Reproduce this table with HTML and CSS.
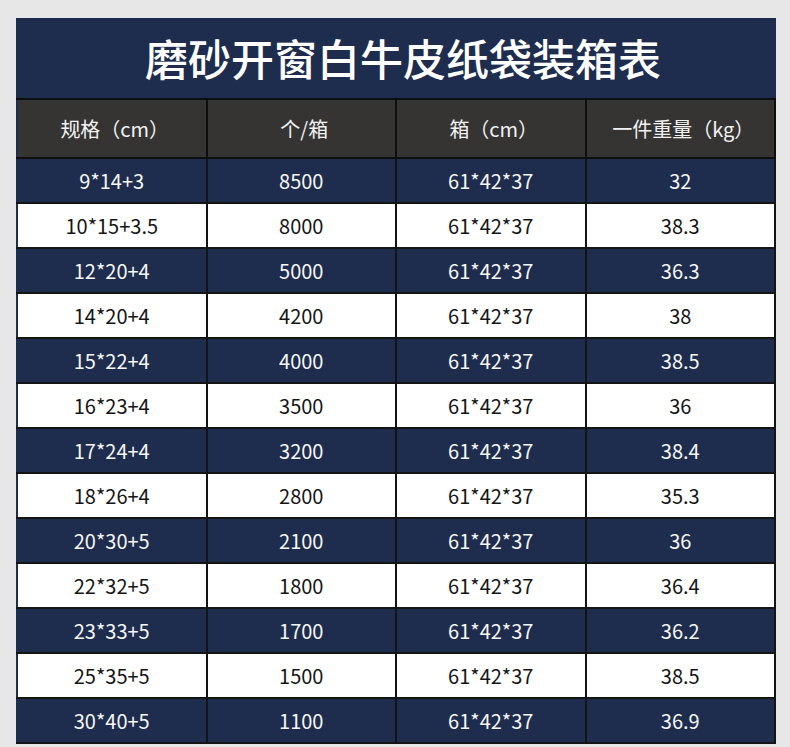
FILE: index.html
```html
<!DOCTYPE html>
<html lang="zh">
<head>
<meta charset="utf-8">
<link rel="stylesheet" href="styles.css">
</head>
<body>
<div class="sheet">
  <h1 class="title">磨砂开窗白牛皮纸袋装箱表</h1>
  <table class="grid">
    <thead>
      <tr><th>规格（cm）</th><th>个/箱</th><th>箱（cm）</th><th>一件重量（kg）</th></tr>
    </thead>
    <tbody>
      <tr class="dark"><td>9*14+3</td><td>8500</td><td>61*42*37</td><td>32</td></tr>
      <tr class="light"><td>10*15+3.5</td><td>8000</td><td>61*42*37</td><td>38.3</td></tr>
      <tr class="dark"><td>12*20+4</td><td>5000</td><td>61*42*37</td><td>36.3</td></tr>
      <tr class="light"><td>14*20+4</td><td>4200</td><td>61*42*37</td><td>38</td></tr>
      <tr class="dark"><td>15*22+4</td><td>4000</td><td>61*42*37</td><td>38.5</td></tr>
      <tr class="light"><td>16*23+4</td><td>3500</td><td>61*42*37</td><td>36</td></tr>
      <tr class="dark"><td>17*24+4</td><td>3200</td><td>61*42*37</td><td>38.4</td></tr>
      <tr class="light"><td>18*26+4</td><td>2800</td><td>61*42*37</td><td>35.3</td></tr>
      <tr class="dark"><td>20*30+5</td><td>2100</td><td>61*42*37</td><td>36</td></tr>
      <tr class="light"><td>22*32+5</td><td>1800</td><td>61*42*37</td><td>36.4</td></tr>
      <tr class="dark"><td>23*33+5</td><td>1700</td><td>61*42*37</td><td>36.2</td></tr>
      <tr class="light"><td>25*35+5</td><td>1500</td><td>61*42*37</td><td>38.5</td></tr>
      <tr class="dark"><td>30*40+5</td><td>1100</td><td>61*42*37</td><td>36.9</td></tr>
    </tbody>
  </table>
</div>
</body>
</html>
```
FILE: styles.css
```css
html, body {
  margin: 0;
  padding: 0;
  background: #e7e7e7;
}
body {
  padding: 18px 14px 0 16px;
  font-family: "Noto Sans CJK SC", "Noto Sans", sans-serif;
}
.sheet {
  width: 760px;
}
.title {
  margin: 0;
  height: 80px;
  background: #1e2c4e;
  color: #ffffff;
  font-size: 43px;
  font-weight: 500;
  letter-spacing: 0;
  padding-left: 14px;
  text-align: center;
  line-height: 78px;
}
.grid {
  width: 760px;
  border-collapse: collapse;
  table-layout: fixed;
}
.grid th, .grid td {
  text-align: center;
  font-size: 20px;
  font-weight: 400;
  padding: 0;
  border: 2px solid #141414;
}
.grid th {
  height: 57px;
  padding-left: 6px;
  background: #353433;
  color: #f2f2f2;
  border-color: #0e0e0e;
}
.grid td {
  height: 43px;
  line-height: 43px;
}
.grid tr.dark td {
  background: #1e2c4e;
  color: #f7f7f7;
}
.grid tr.light td {
  background: #ffffff;
  color: #151515;
}
.grid td:first-child, .grid th:first-child {
  border-left-color: #1e2c4e;
}
```
